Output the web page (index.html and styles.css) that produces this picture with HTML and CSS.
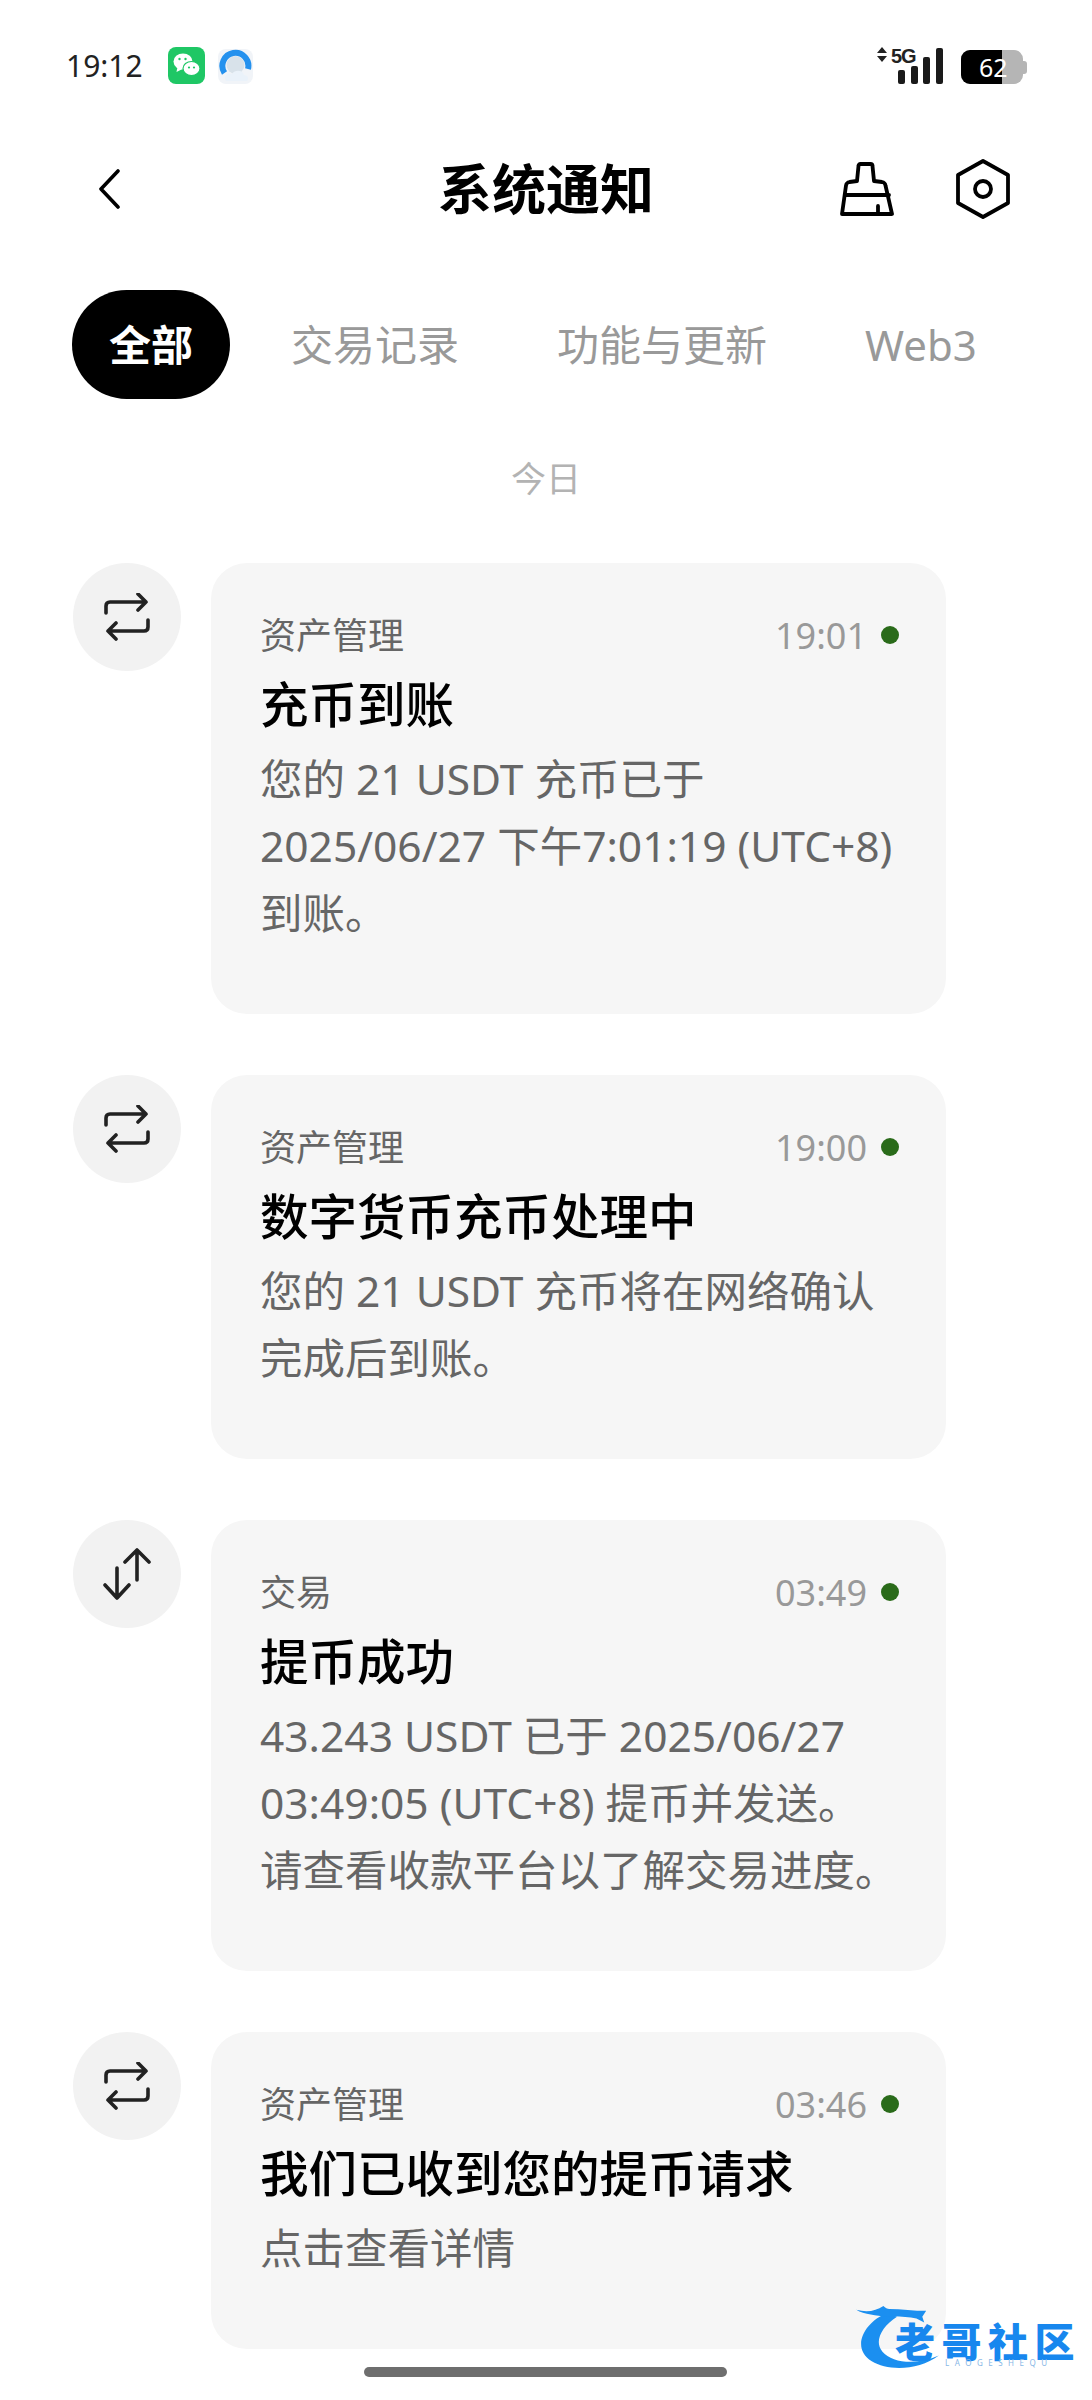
FILE: index.html
```html
<!DOCTYPE html>
<html lang="zh-CN">
  <head>
    <meta charset="UTF-8" />
    <title>系统通知</title>
    <link rel="stylesheet" href="styles.css">
  </head>
  <body>
    <div class="page">
      <div class="status-bar">
        <span class="clock">19:12</span>
        <svg class="app-icon wechat" viewBox="0 0 37 37">
          <rect width="37" height="37" rx="8" fill="#1fc765" />
          <ellipse cx="15" cy="14.5" rx="9.5" ry="8" fill="#fff" />
          <path d="M9.5 20l-1 5 6-3z" fill="#fff" />
          <ellipse cx="23.5" cy="21.5" rx="8.5" ry="7" fill="#fff" stroke="#1fc765" stroke-width="1.2" />
          <circle cx="11.5" cy="12" r="1.2" fill="#1fc765" />
          <circle cx="17.5" cy="12" r="1.2" fill="#1fc765" />
          <circle cx="21" cy="20.5" r="1.1" fill="#1fc765" />
          <circle cx="26" cy="20.5" r="1.1" fill="#1fc765" />
        </svg>
        <svg class="app-icon browser" viewBox="0 0 35 35">
          <rect width="35" height="35" rx="8" fill="#f1f4f8" />
          <circle cx="17.5" cy="16" r="9" fill="#d8e2ea" />
          <path d="M6.5 24A13 13 0 1 1 30 20" fill="none" stroke="#2491ee" stroke-width="6" />
          <path d="M8 32c-3-5 2-9 6-7 3-5 11-4 12 1 4 0 5 4 3 6z" fill="#eaf2fa" />
        </svg>
        <div class="status-right">
          <svg class="signal" viewBox="0 0 68 38">
            <path d="M7 1l5 6H2zM7 16l5-6H2z" fill="#222" />
            <text class="signal-label" x="16" y="17">5G</text>
            <rect x="23" y="24" width="7" height="14" rx="2" fill="#1a1a1a" />
            <rect x="36" y="20" width="7" height="18" rx="2" fill="#1a1a1a" />
            <rect x="48" y="11" width="7" height="27" rx="2" fill="#1a1a1a" />
            <rect x="61" y="2" width="7" height="36" rx="2" fill="#1a1a1a" />
          </svg>
          <div class="battery">
            <div class="battery-fill"></div>
            <span class="battery-level">62</span>
          </div>
        </div>
      </div>

      <div class="header">
        <svg class="back" viewBox="0 0 22 40">
          <path d="M20 2L3 20l17 18" fill="none" stroke="#000" stroke-width="3.6" stroke-linecap="round" stroke-linejoin="round" />
        </svg>
        <h1 class="title">系统通知</h1>
        <div class="actions">
          <svg class="icon-broom" viewBox="0 0 54 54">
            <path d="M17 19L18.5 4q0-2 2-2h10q2 0 2 2l1.5 15 8 1q3 .5 3.5 3.5L52 52H2L6 23.5q.5-3 3.5-3.5zM5 33h44M38 52v-8" fill="none" stroke="#000" stroke-width="3.8" stroke-linecap="round" stroke-linejoin="round" />
          </svg>
          <svg class="icon-hex" viewBox="0 0 54 60">
            <path d="M27 2l25 14v28L27 58 2 44V16z" fill="none" stroke="#000" stroke-width="3.8" stroke-linejoin="round" />
            <circle cx="27" cy="30" r="8" fill="none" stroke="#000" stroke-width="3.8" />
          </svg>
        </div>
      </div>

      <div class="tabs">
        <span class="tab active">全部</span>
        <span class="tab">交易记录</span>
        <span class="tab">功能与更新</span>
        <span class="tab">Web3</span>
      </div>

      <div class="day">今日</div>

      <div class="list">
        <div class="item">
          <div class="avatar">
            <svg class="swap" viewBox="0 0 48 48">
              <path d="M3 20v-7q0-4 4-4h36M35 1l8 8-8 8M45 27v7q0 4-4 4H5M13 30l-8 8 8 8" fill="none" stroke="#222" stroke-width="3.6" stroke-linecap="round" stroke-linejoin="round" />
            </svg>
          </div>
          <div class="card">
            <div class="card-top"><span class="label">资产管理</span><span class="time">19:01</span><span class="dot"></span></div>
            <div class="card-title">充币到账</div>
            <p class="card-text">您的 21 USDT 充币已于<br>2025/06/27 下午7:01:19 (UTC+8)<br>到账。</p>
          </div>
        </div>

        <div class="item">
          <div class="avatar">
            <svg class="swap" viewBox="0 0 48 48">
              <path d="M3 20v-7q0-4 4-4h36M35 1l8 8-8 8M45 27v7q0 4-4 4H5M13 30l-8 8 8 8" fill="none" stroke="#222" stroke-width="3.6" stroke-linecap="round" stroke-linejoin="round" />
            </svg>
          </div>
          <div class="card">
            <div class="card-top"><span class="label">资产管理</span><span class="time">19:00</span><span class="dot"></span></div>
            <div class="card-title">数字货币充币处理中</div>
            <p class="card-text">您的 21 USDT 充币将在网络确认<br>完成后到账。</p>
          </div>
        </div>

        <div class="item">
          <div class="avatar">
            <svg class="updown" viewBox="0 0 48 52">
              <path d="M14 20v30M2 37l12 13 12-13M34 32V2M22 14L34 2l12 12" fill="none" stroke="#222" stroke-width="3.6" stroke-linecap="round" stroke-linejoin="round" />
            </svg>
          </div>
          <div class="card">
            <div class="card-top"><span class="label">交易</span><span class="time">03:49</span><span class="dot"></span></div>
            <div class="card-title">提币成功</div>
            <p class="card-text">43.243 USDT 已于 2025/06/27<br>03:49:05 (UTC+8) 提币并发送。<br>请查看收款平台以了解交易进度。</p>
          </div>
        </div>

        <div class="item">
          <div class="avatar">
            <svg class="swap" viewBox="0 0 48 48">
              <path d="M3 20v-7q0-4 4-4h36M35 1l8 8-8 8M45 27v7q0 4-4 4H5M13 30l-8 8 8 8" fill="none" stroke="#222" stroke-width="3.6" stroke-linecap="round" stroke-linejoin="round" />
            </svg>
          </div>
          <div class="card">
            <div class="card-top"><span class="label">资产管理</span><span class="time">03:46</span><span class="dot"></span></div>
            <div class="card-title">我们已收到您的提币请求</div>
            <p class="card-text">点击查看详情</p>
          </div>
        </div>
      </div>

      <div class="home-bar"></div>

      <div class="watermark">
        <svg class="wm-dragon" viewBox="0 0 90 70">
          <path d="M34 8C10 18-4 44 18 58c16 10 48 10 69-6-22 10-48 8-58-4C20 38 28 22 44 12z" fill="#1b8ff0" />
          <path d="M2 5c12 3 20 1 28-4 2 2 4 3 6 3 12 0 26 2 38 2l-4 6 2 6-8-4c-10-2-22-3-32-2C24 11 10 10 2 5z" fill="#1b8ff0" />
        </svg>
        <span class="wm-name">老哥社区</span>
        <span class="wm-sub">LAOGESHEQU</span>
      </div>
    </div>
  </body>
</html>
```

FILE: styles.css
```css
* {
  box-sizing: border-box;
}
html,
body {
  margin: 0;
  padding: 0;
  background: #fff;
}
.page {
  position: relative;
  width: 1092px;
  height: 2400px;
  overflow: hidden;
  font-family: "Noto Sans", "Noto Sans CJK SC", sans-serif;
}

/* status bar */
.status-bar {
  display: flex;
  align-items: center;
  height: 38px;
  margin-top: 46px;
  padding: 0 65px 0 66px;
}
.clock {
  width: 102px;
  font-size: 30px;
  color: #222;
}
.app-icon {
  display: block;
}
.wechat {
  width: 37px;
  height: 37px;
  margin-right: 13px;
}
.browser {
  width: 35px;
  height: 35px;
  margin-top: 3px;
}
.status-right {
  display: flex;
  align-items: flex-end;
  gap: 18px;
  margin-left: auto;
}
.signal {
  display: block;
  width: 68px;
  height: 38px;
}
.signal-label {
  font-size: 20px;
  font-weight: 700;
  fill: #222;
  font-family: "Liberation Sans", sans-serif;
  letter-spacing: -1.2px;
}
.battery {
  position: relative;
  width: 62px;
  height: 34px;
  margin-right: 4px;
  border-radius: 9px;
  background: #b5b5b5;
}
.battery::after {
  content: "";
  position: absolute;
  right: -4px;
  top: 11px;
  width: 4px;
  height: 13px;
  border-radius: 0 3px 3px 0;
  background: #b5b5b5;
}
.battery-fill {
  width: 41px;
  height: 100%;
  border-radius: 9px 0 0 9px;
  background: #000;
}
.battery-level {
  position: absolute;
  left: 18px;
  top: 0;
  font-size: 25px;
  line-height: 34px;
  color: #fff;
}

/* header */
.header {
  display: grid;
  grid-template-columns: 1fr auto 1fr;
  align-items: center;
  height: 60px;
  margin-top: 75px;
  padding: 0 82px;
}
.back {
  width: 22px;
  height: 40px;
  margin-left: 16px;
}
.title {
  margin: 0;
  font-size: 54px;
  font-weight: 700;
  color: #000;
  line-height: 60px;
}
.actions {
  display: flex;
  align-items: center;
  justify-content: flex-end;
  gap: 62px;
}
.icon-broom {
  width: 54px;
  height: 54px;
}
.icon-hex {
  width: 54px;
  height: 60px;
}

/* tabs */
.tabs {
  display: flex;
  align-items: center;
  gap: 24px;
  height: 109px;
  margin-top: 71px;
  padding-left: 72px;
}
.tab {
  padding: 0 37px;
  font-size: 42px;
  color: #999;
  line-height: 109px;
  white-space: nowrap;
}
.tab.active {
  border-radius: 55px;
  background: #000;
  color: #fff;
  font-weight: 700;
}

.day {
  margin-top: 55px;
  text-align: center;
  font-size: 35px;
  line-height: 50px;
  color: #b3b3b3;
}

/* notification list */
.list {
  display: flex;
  flex-direction: column;
  gap: 61px;
  margin-top: 59px;
  padding-left: 73px;
}
.item {
  display: flex;
  align-items: flex-start;
  gap: 30px;
}
.avatar {
  display: flex;
  align-items: center;
  justify-content: center;
  flex-shrink: 0;
  width: 108px;
  height: 108px;
  border-radius: 50%;
  background: #f2f2f2;
}
.swap {
  width: 48px;
  height: 48px;
}
.updown {
  width: 48px;
  height: 52px;
}
.card {
  width: 735px;
  padding: 45px 47px 68px 49px;
  border-radius: 36px;
  background: #f6f6f6;
}
.card-top {
  display: flex;
  align-items: center;
  height: 50px;
}
.label {
  font-size: 36px;
  color: #666;
}
.time {
  margin-left: auto;
  margin-right: 14px;
  margin-top: 4px;
  font-size: 36px;
  color: #999;
}
.dot {
  width: 18px;
  height: 18px;
  margin-top: 4px;
  border-radius: 50%;
  background: #2a6b1a;
}
.card-title {
  margin-top: 10px;
  font-size: 48.5px;
  font-weight: 500;
  line-height: 72px;
  color: #000;
}
.card-text {
  margin: 5px 0 0;
  font-size: 42.5px;
  line-height: 67px;
  color: #666;
  white-space: nowrap;
}

.home-bar {
  position: absolute;
  left: 364px;
  bottom: 23px;
  width: 363px;
  height: 10px;
  border-radius: 5px;
  background: #6e6e6e;
}

/* watermark over the last card */
.watermark {
  position: absolute;
  left: 853px;
  top: 2305px;
  width: 225px;
  height: 68px;
}
.wm-dragon {
  position: absolute;
  left: 0;
  top: 0;
  width: 90px;
  height: 68px;
}
.wm-name {
  position: absolute;
  left: 42px;
  top: 21px;
  font-size: 40px;
  line-height: 32px;
  font-weight: 900;
  letter-spacing: 6.5px;
  color: #1787ee;
  white-space: nowrap;
}
.wm-sub {
  position: absolute;
  left: 92px;
  top: 53px;
  font-size: 8px;
  line-height: 10px;
  letter-spacing: 5.5px;
  color: #8ab8e6;
}
```
